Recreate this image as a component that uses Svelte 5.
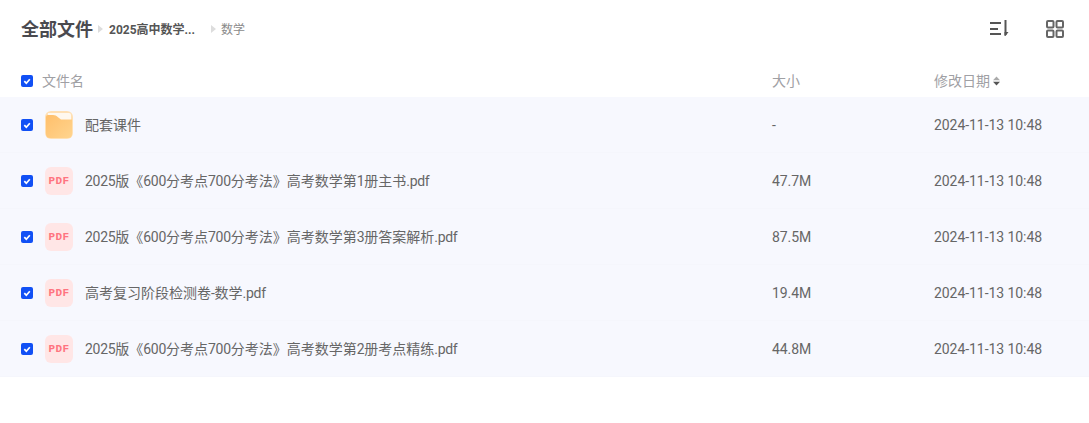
<script>
  const files = [
    { name: '配套课件', size: '-', type: 'folder' },
    { name: '2025版《600分考点700分考法》高考数学第1册主书.pdf', size: '47.7M', type: 'pdf' },
    { name: '2025版《600分考点700分考法》高考数学第3册答案解析.pdf', size: '87.5M', type: 'pdf' },
    { name: '高考复习阶段检测卷-数学.pdf', size: '19.4M', type: 'pdf' },
    { name: '2025版《600分考点700分考法》高考数学第2册考点精练.pdf', size: '44.8M', type: 'pdf' }
  ];
  const parts = (s) => s.split(/([\x00-\x7f]+)/).filter(Boolean);
  const isLatin = (s) => /^[\x00-\x7f]+$/.test(s);
</script>

<div class="page">
  <header class="top">
    <nav class="crumbs">
      <span class="root">全部文件</span>
      <span class="sep"></span>
      <span class="mid">2025高中数学...</span>
      <span class="sep second"></span>
      <span class="leaf">数学</span>
    </nav>
    <div class="tools">
      <svg class="tool" width="20" height="20" viewBox="0 0 20 20" fill="none" stroke="#555" stroke-width="2">
        <path d="M1 4h11M1 10h8M1 15h11" />
        <path d="M16.500 1v15" />
        <path d="M15.500 13h4l-3 4h-1z" fill="#555" stroke="none" />
      </svg>
      <svg class="tool" width="20" height="20" viewBox="0 0 20 20" fill="none" stroke="#666" stroke-width="2">
        <rect x="2" y="2" width="6.500" height="6.500" rx="1" />
        <rect x="11.500" y="2" width="6.500" height="6.500" rx="1" />
        <rect x="2" y="11.500" width="6.500" height="6.500" rx="1" />
        <rect x="11.500" y="11.500" width="6.500" height="6.500" rx="1" />
      </svg>
    </div>
  </header>

  <div class="head grid">
    <div class="first">
      <span class="check"><svg width="12" height="12" viewBox="0 0 12 12"><path d="M3.300 6.200l2 2 3.500-4" fill="none" stroke="#fff" stroke-width="1.700" /></svg></span>
      <span class="label">文件名</span>
    </div>
    <div class="label">大小</div>
    <div class="date"><span class="label">修改日期</span>
      <svg width="7" height="10" viewBox="0 0 7 10"><path d="M3.500 0.500L7 4.200H0z" fill="#aaa" /><path d="M3.500 9.500L7 5.800H0z" fill="#555" /></svg>
    </div>
  </div>

  <div class="rows">
    {#each files as f}
      <div class="row grid">
        <div class="first">
          <span class="check"><svg width="12" height="12" viewBox="0 0 12 12"><path d="M3.300 6.200l2 2 3.500-4" fill="none" stroke="#fff" stroke-width="1.700" /></svg></span>
          {#if f.type === 'folder'}
            <span class="icon folder">
              <svg width="28" height="28" viewBox="0 0 28 28">
                <defs>
                  <linearGradient id="fold" x1="0" y1="0" x2="1" y2="1">
                    <stop offset="0" stop-color="#ffbf6b" />
                    <stop offset="1" stop-color="#ffd48e" />
                  </linearGradient>
                </defs>
                <rect width="28" height="28" rx="6" fill="#ffe0b4" />
                <path d="M3 2h21a2 2 0 0 1 2 2v5H3z" fill="#fff8ee" />
                <path d="M1 6a2 2 0 0 1 2-2h5c2 0 3.500 .8 5 2.200L16 8.500h11V23a4 4 0 0 1-4 4H5a4 4 0 0 1-4-4z" fill="url(#fold)" />
              </svg>
            </span>
          {:else}
            <span class="icon pdf">PDF</span>
          {/if}
          <span class="name">{#each parts(f.name) as p}{#if isLatin(p)}<span class="latin">{p}</span>{:else}{p}{/if}{/each}</span>
        </div>
        <div class="size">{f.size}</div>
        <div class="time">2024-11-13 10:48</div>
      </div>
    {/each}
  </div>
</div>

<style>
  :global(body) {
    margin: 0;
    background: #fff;
  }
  .page {
    width: 1089px;
    font-family: Roboto, "Noto Sans CJK SC", sans-serif;
    font-size: 14px;
    color: #666;
  }
  .top {
    height: 57px;
    display: flex;
    align-items: center;
    justify-content: space-between;
    padding: 0 24px 0 21px;
  }
  .crumbs {
    display: flex;
    align-items: center;
    height: 26px;
  }
  .root {
    font-size: 18px;
    font-weight: 700;
    color: #4a4a4f;
    padding-bottom: 2px;
  }
  .mid {
    font-size: 12px;
    font-weight: 700;
    color: #555;
    width: 92px;
    margin-left: 6px;
  }
  .leaf {
    font-size: 12px;
    color: #8a8a8a;
    margin-left: 5px;
  }
  .sep {
    width: 0;
    height: 0;
    margin-left: 5px;
    border-left: 5px solid #ddd;
    border-top: 4px solid transparent;
    border-bottom: 4px solid transparent;
  }
  .sep.second {
    margin-left: 10px;
  }
  .tools {
    display: flex;
    gap: 36px;
  }
  .tool {
    display: block;
  }
  .grid {
    display: grid;
    grid-template-columns: 751px 162px 1fr;
    align-items: center;
    padding-left: 21px;
  }
  .first {
    display: flex;
    align-items: center;
    min-width: 0;
  }
  .head {
    height: 40px;
    padding-top: 7px;
    box-sizing: border-box;
    color: #a0a0a4;
  }
  .label {
    padding-bottom: 2px;
  }
  .head .first .label {
    margin-left: 9px;
  }
  .date {
    display: flex;
    align-items: center;
    gap: 3px;
  }
  .check {
    width: 12px;
    height: 12px;
    flex: none;
    border-radius: 2px;
    background: #1150f5;
    display: flex;
  }
  .rows {
    background: #f7f8fe;
  }
  .row {
    height: 56px;
    box-sizing: border-box;
    color: #666;
    border-bottom: 1px solid #f5f6fc;
  }
  .icon {
    width: 28px;
    height: 28px;
    flex: none;
    margin-left: 12px;
    margin-right: 12px;
    display: flex;
    align-items: center;
    justify-content: center;
  }
  .pdf {
    background: #ffe6e6;
    border-radius: 6px;
    color: #ff7480;
    font-family: "Liberation Mono", monospace;
    font-size: 11px;
    font-weight: 700;
    letter-spacing: 0.400px;
  }
  .name {
    white-space: nowrap;
    padding-bottom: 2px;
  }
  .latin {
    letter-spacing: -0.300px;
  }
  .size, .time {
    letter-spacing: -0.060px;
  }
</style>
